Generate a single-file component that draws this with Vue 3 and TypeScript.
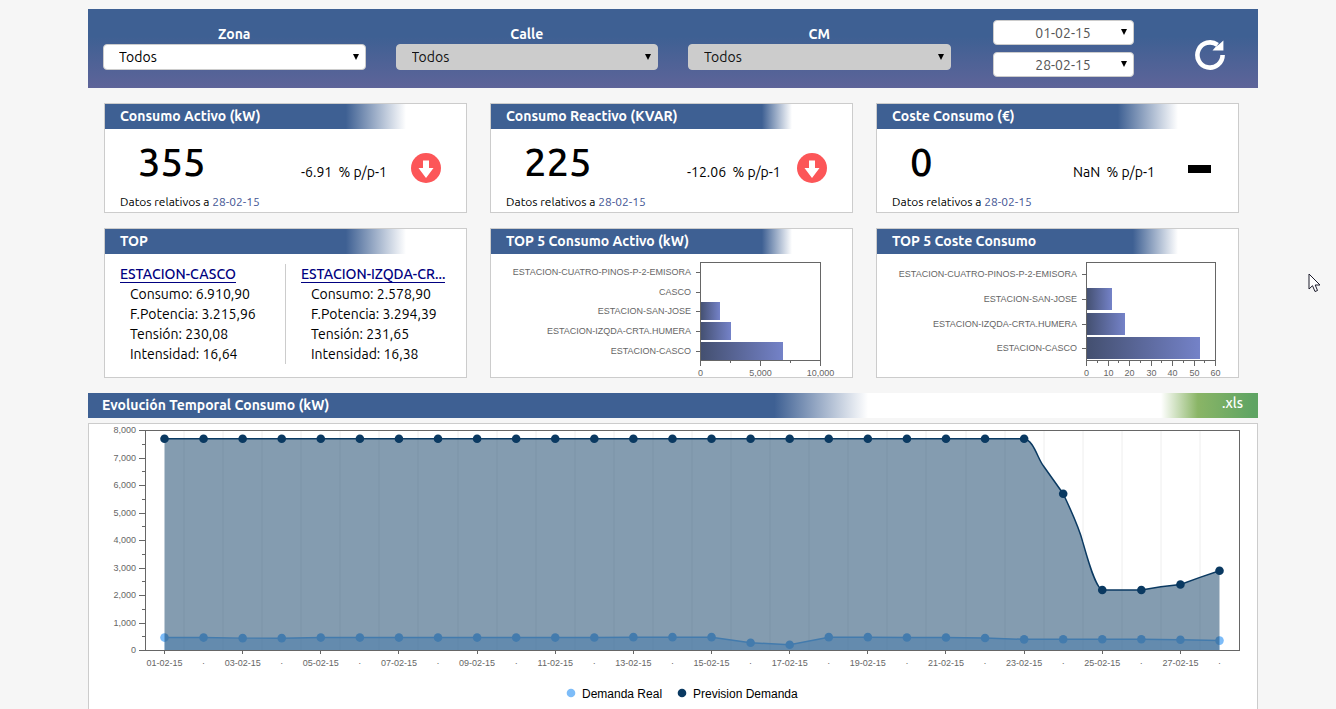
<script setup lang="ts">
import { ref } from 'vue'

interface Filter { id: string; label: string; disabled: boolean }
interface Kpi { title: string; value: string; change: string; trend: 'down' | 'flat'; fade: string }
interface Station { name: string; rows: [string, string][] }
interface Bar { name: string; value: number; cy: number }
interface Tick { value: number; label: string }
interface BarChart {
  title: string; fade: string; left: number; width: number; max: number
  barHeight: number; bars: Bar[]; ticks: Tick[]; minor: number[]
}

const filters: Filter[] = [
  { id: 'zona', label: 'Zona', disabled: false },
  { id: 'calle', label: 'Calle', disabled: true },
  { id: 'cm', label: 'CM', disabled: true },
]
const selected = ref<Record<string, string>>({ zona: 'Todos', calle: 'Todos', cm: 'Todos' })
const dates = [
  { label: 'Desde', value: '01-02-15' },
  { label: 'Hasta', value: '28-02-15' },
]

const kpis: Kpi[] = [
  { title: 'Consumo Activo (kW)', value: '355', change: '-6.91', trend: 'down', fade: 'fade-80' },
  { title: 'Consumo Reactivo (KVAR)', value: '225', change: '-12.06', trend: 'down', fade: 'fade-90' },
  { title: 'Coste Consumo (€)', value: '0', change: 'NaN', trend: 'flat', fade: 'fade-80' },
]

const stations: Station[] = [
  { name: 'ESTACION-CASCO', rows: [['Consumo', '6.910,90'], ['F.Potencia', '3.215,96'], ['Tensión', '230,08'], ['Intensidad', '16,64']] },
  { name: 'ESTACION-IZQDA-CR...', rows: [['Consumo', '2.578,90'], ['F.Potencia', '3.294,39'], ['Tensión', '231,65'], ['Intensidad', '16,38']] },
]

const charts: BarChart[] = [
  {
    title: 'TOP 5 Consumo Activo (kW)', fade: 'fade-90', left: 209, width: 120, max: 10000, barHeight: 18,
    bars: [
      { name: 'ESTACION-CUATRO-PINOS-P-2-EMISORA', value: 0, cy: 18 },
      { name: 'CASCO', value: 0, cy: 38 },
      { name: 'ESTACION-SAN-JOSE', value: 1650, cy: 57 },
      { name: 'ESTACION-IZQDA-CRTA.HUMERA', value: 2579, cy: 77 },
      { name: 'ESTACION-CASCO', value: 6911, cy: 97 },
    ],
    ticks: [{ value: 0, label: '0' }, { value: 5000, label: '5,000' }, { value: 10000, label: '10,000' }],
    minor: [2500, 7500],
  },
  {
    title: 'TOP 5 Coste Consumo', fade: 'fade-85', left: 209, width: 129, max: 60, barHeight: 22,
    bars: [
      { name: 'ESTACION-CUATRO-PINOS-P-2-EMISORA', value: 0, cy: 20 },
      { name: 'ESTACION-SAN-JOSE', value: 12, cy: 45 },
      { name: 'ESTACION-IZQDA-CRTA.HUMERA', value: 18, cy: 70 },
      { name: 'ESTACION-CASCO', value: 53, cy: 94 },
    ],
    ticks: [0, 10, 20, 30, 40, 50, 60].map((n) => ({ value: n, label: String(n) })),
    minor: [5, 15, 25, 35, 45, 55],
  },
]
const barX = (c: BarChart, v: number): number => Math.round(c.left + (v / c.max) * c.width)

const px = (i: number): number => 75.5 + (i * 1055) / 27
const py = (v: number): number => 226.5 - v * 0.0275
const days = Array.from({ length: 28 }, (_, i) => i)
const real = [470, 470, 450, 450, 470, 470, 470, 470, 470, 470, 470, 475, 485, 485, 485, 280, 210, 485, 485, 475, 475, 455, 405, 410, 410, 410, 390, 360]
const forecast = [...Array<number>(23).fill(7700), 5700, 2200, 2200, 2400, 2900]

const at = (i: number, v: number): string => `${px(i)} ${py(v)}`
const realLine = 'M' + real.map((v, i) => at(i, v)).join('L')
const forecastLine =
  `M${at(0, 7700)}L${at(22, 7700)}` +
  `C${at(22.25, 7640)} ${at(22.35, 6950)} ${at(22.5, 6700)}L${at(23, 5700)}` +
  `C${at(23.15, 5250)} ${at(23.4, 4500)} ${at(23.5, 3950)}` +
  `C${at(23.62, 3350)} ${at(23.82, 2300)} ${at(24, 2200)}` +
  `L${at(25, 2200)}L${at(25.5, 2320)}L${at(26, 2400)}L${at(26.5, 2660)}L${at(27, 2900)}`
const close = `L${at(27, 0)}L${at(0, 0)}Z`
const yTicks = [0, 1, 2, 3, 4, 5, 6, 7, 8]
const dayLabel = (i: number): string => `${String(i + 1).padStart(2, '0')}-02-15`
</script>

<template>
  <div class="page">
    <main class="container">
      <header class="filters">
        <div v-for="f in filters" :key="f.id" class="filter">
          <label :for="f.id">{{ f.label }}</label>
          <div class="select-box">
            <select :id="f.id" v-model="selected[f.id]" :disabled="f.disabled"><option>Todos</option></select>
            <span class="caret"></span>
          </div>
        </div>
        <div class="period">
          <div class="dates">
            <div v-for="d in dates" :key="d.label" class="select-box date">
              <select :aria-label="d.label"><option>{{ d.value }}</option></select>
              <span class="caret"></span>
            </div>
          </div>
          <button class="refresh" type="button" aria-label="Actualizar">
            <svg width="30" height="30" viewBox="0 0 30 30">
              <path d="M27.6 15A12.6 12.6 0 1 1 22.5 4.9" fill="none" stroke="#fff" stroke-width="4.6" />
              <path d="M28.4 0.5V10.5H17.5L20.5 7L24.5 4Z" fill="#fff" />
            </svg>
          </button>
        </div>
      </header>

      <div class="cards">
        <section v-for="k in kpis" :key="k.title" class="card">
          <h2 :class="k.fade">{{ k.title }}</h2>
          <div class="kpi">
            <strong>{{ k.value }}</strong>
            <span class="change">{{ k.change }}&nbsp; % p/p-1</span>
            <svg v-if="k.trend === 'down'" width="30" height="30" viewBox="0 0 30 30">
              <circle cx="15" cy="15" r="15" fill="#fc5658" />
              <path d="M12 7.5H18V15H22.5L15 25L7.5 15H12Z" fill="#fff" />
            </svg>
            <svg v-else width="30" height="30" viewBox="0 0 30 30">
              <rect x="5" y="12" width="23" height="8" fill="#000" />
            </svg>
          </div>
          <p class="note">Datos relativos a <span>28-02-15</span></p>
        </section>

        <section class="card">
          <h2 class="fade-80">TOP</h2>
          <div class="stations">
            <div v-for="s in stations" :key="s.name" class="station">
              <a href="#">{{ s.name }}</a>
              <ul>
                <li v-for="r in s.rows" :key="r[0]">{{ r[0] }}: {{ r[1] }}</li>
              </ul>
            </div>
          </div>
        </section>

        <section v-for="c in charts" :key="c.title" class="card">
          <h2 :class="c.fade">{{ c.title }}</h2>
          <svg class="chart" viewBox="0 0 361 123" role="img" :aria-label="c.title">
            <defs>
              <linearGradient id="bar-fill">
                <stop offset="0" stop-color="#434f6f" />
                <stop offset="1" stop-color="#7482c8" />
              </linearGradient>
            </defs>
            <g v-for="b in c.bars" :key="b.name">
              <rect v-if="b.value" :x="c.left" :y="b.cy - c.barHeight / 2" :width="barX(c, b.value) - c.left" :height="c.barHeight" fill="url(#bar-fill)" />
              <path :d="`M${c.left - 4} ${b.cy + 0.5}h5`" class="axis" />
              <text :x="c.left - 9" :y="b.cy + 3" text-anchor="end">{{ b.name }}</text>
            </g>
            <rect :x="c.left + 0.5" y="8.5" :width="c.width" height="98" class="axis" />
            <path v-for="m in c.minor" :key="m" :d="`M${barX(c, m) + 0.5} 107v2`" class="axis" />
            <g v-for="t in c.ticks" :key="t.value">
              <path :d="`M${barX(c, t.value) + 0.5} 107v5`" class="axis" />
              <text :x="barX(c, t.value) + 0.5" y="122" text-anchor="middle">{{ t.label }}</text>
            </g>
          </svg>
        </section>
      </div>

      <div class="bar">
        <h2>Evolución Temporal Consumo (kW)</h2>
        <a href="#">.xls</a>
      </div>

      <section class="panel">
        <svg class="chart" viewBox="0 0 1168 285" role="img" aria-label="Evolución Temporal Consumo">
          <path v-for="i in 27" :key="i" :d="`M${Math.round(px(i - 0.5))} 7V226`" stroke="#eee" stroke-width="1" />
          <path :d="realLine + close" fill="#7dbcf8" opacity="0.5" />
          <path :d="realLine" fill="none" stroke="#7dbcf8" stroke-width="1.5" />
          <circle v-for="i in days" :key="i" :cx="px(i)" :cy="py(real[i])" r="4.3" fill="#7dbcf8" />
          <path :d="forecastLine + close" fill="#0a3961" opacity="0.5" />
          <path :d="forecastLine" fill="none" stroke="#0a3961" stroke-width="1.5" />
          <circle v-for="i in days" :key="i" :cx="px(i)" :cy="py(forecast[i])" r="4.3" fill="#0a3961" />
          <rect x="56.5" y="6.5" width="1094" height="220" class="axis" />
          <g v-for="t in yTicks" :key="t">
            <path :d="`M50 ${Math.round(226 - t * 27.5) + 0.5}h6`" class="axis" />
            <path v-if="t < 8" :d="`M53 ${Math.round(212 - t * 27.5) + 0.5}h3`" class="axis" />
            <text x="47" :y="Math.round(229 - t * 27.5)" text-anchor="end">{{ t ? `${t},000` : '0' }}</text>
          </g>
          <g v-for="i in days" :key="i">
            <path v-if="i % 2 === 0" :d="`M${Math.floor(px(i)) + 0.5} 227v3`" class="axis" />
            <text :x="px(i)" :y="242" text-anchor="middle">{{ i % 2 === 0 ? dayLabel(i) : '·' }}</text>
          </g>
          <circle cx="482" cy="269" r="4.3" fill="#7dbcf8" />
          <text x="493" y="274" class="legend">Demanda Real</text>
          <circle cx="593" cy="269" r="4.3" fill="#0a3961" />
          <text x="604" y="274" class="legend">Prevision Demanda</text>
        </svg>
      </section>
    </main>

    <svg class="pointer" width="13" height="20" viewBox="0 0 13 20" aria-hidden="true">
      <path d="M1 1V16L4.5 12.7L7 18.5L9.5 17.5L7.2 12H12Z" fill="#fff" stroke="#1c1c2c" stroke-width="1" />
    </svg>
  </div>
</template>

<style>
body { background: #f6f6f6; }
</style>

<style scoped>
* { box-sizing: border-box; }
.page {
  position: relative;
  min-height: 100vh;
  padding: 9px 0 0 10px;
  display: flex;
  background: #f6f6f6;
  color: #000;
  font: 14px/20px Ubuntu, "Noto Sans", sans-serif;
}
.container { width: 100%; max-width: 1170px; margin: 0 auto; display: flex; flex-direction: column; }
h2 { margin: 0; font-size: 14px; line-height: 25px; font-weight: 600; color: #fff; white-space: nowrap; }

.filters { display: grid; grid-template-columns: repeat(4, minmax(0, 1fr)); height: 79px; background: linear-gradient(#3e6093 35%, #5e6499); }
.filter { padding: 16px 15px 0; }
.filter label { display: block; line-height: 19px; font-weight: 600; color: #fff; text-align: center; }
.select-box { position: relative; }
select {
  display: block;
  width: 100%;
  height: 26px;
  padding: 0 15px;
  appearance: none;
  border: 1px solid #ccc;
  border-radius: 4px;
  background: #fff;
  color: #000;
  font: inherit;
  opacity: 1;
}
select:disabled { background: #ccc; color: #111; }
.caret {
  position: absolute;
  right: 7px;
  top: 10px;
  border: 3px solid transparent;
  border-top: 6px solid #000;
  border-bottom: 0;
  pointer-events: none;
}
.period { display: flex; align-items: flex-start; padding: 11px 0 0 27px; gap: 61px; }
.dates { display: grid; gap: 7px; width: 141px; }
.date select { height: 25px; color: #555; text-align-last: center; }
.date .caret { top: 9px; }
.refresh { margin-top: 20px; padding: 0; border: 0; background: none; width: 30px; height: 30px; }
.refresh svg { display: block; overflow: visible; }

.cards { display: grid; grid-template-columns: repeat(3, minmax(0, 1fr)); gap: 15px 23px; padding: 15px 19px 15px 16px; }
.card { border: 1px solid #ccc; background: #fff; }
.card h2 { padding-left: 15px; width: 83.33%; }
.fade-80 { background: linear-gradient(90deg, #3e6093 80%, #fff); }
.fade-85 { background: linear-gradient(90deg, #3e6093 85%, #fff); }
.fade-90 { background: linear-gradient(90deg, #3e6093 90%, #fff); }
.kpi { display: grid; grid-template-columns: 163px 110px 30px; padding-left: 33px; height: 63px; align-items: center; }
.kpi strong { font-size: 40px; line-height: 40px; font-weight: 500; padding-top: 3px; }
.change { padding-top: 23px; white-space: nowrap; }
.kpi svg { margin-top: 15px; }
.note { margin: 0; padding: 0 0 0 15px; font-size: 12px; }
.note span { color: #3f5594; }

.stations { display: grid; grid-template-columns: 181px 1fr; padding: 10px 0 13px 15px; }
.station { height: 100px; }
.station + .station { border-left: 1px solid #ccc; padding-left: 15px; margin-left: -16px; }
.station a { display: block; width: fit-content; height: 19px; border-bottom: 1px solid #000080; color: #000080; font-weight: 500; text-decoration: none; white-space: nowrap; }
.station ul { margin: 1px 0 0; padding: 0 0 0 10px; list-style: none; }
.station li { white-space: nowrap; }

.chart { display: block; width: 100%; font-family: "Liberation Sans", Arial, sans-serif; font-size: 9px; fill: #666; }
.axis { fill: none; stroke: #666; stroke-width: 1; }
.legend { font-size: 12px; fill: #000; }

.bar { display: flex; justify-content: space-between; background: #fff; }
.bar h2 { width: 66.67%; padding-left: 14px; background: linear-gradient(90deg, #3e6093 88%, #fff); }
.bar a {
  width: 97px;
  padding-right: 15px;
  line-height: 21px;
  text-align: right;
  font-weight: 500;
  color: #fff;
  text-decoration: none;
  background: linear-gradient(90deg, #fff, #8ab566 38%, #5fa463 95%);
}
.panel { flex: 1; margin-top: 5px; border: 1px solid #ccc; border-bottom: 0; background: #fff; }
.pointer { position: absolute; left: 1308px; top: 273px; }
</style>
